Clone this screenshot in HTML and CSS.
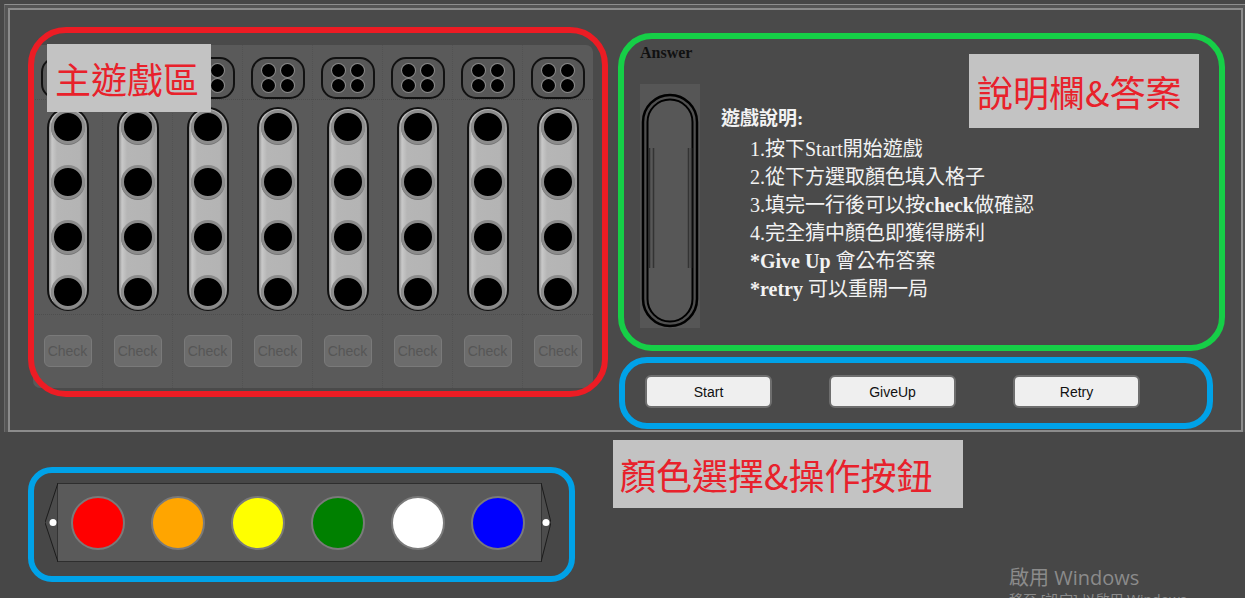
FILE: index.html
```html
<!DOCTYPE html>
<html lang="zh-Hant">
<head>
<meta charset="utf-8">
<title>Mastermind</title>
<link rel="stylesheet" href="styles.css">
</head>
<body>
<div class="screen">
  <div class="frame">
    <div class="panel">
      <div class="board">
        <div class="col"><div class="hint-cell"><div class="hint"><i></i><i></i><i></i><i></i></div></div><div class="tube-cell"><div class="tube"><b class="peg"></b><b class="peg"></b><b class="peg"></b><b class="peg"></b></div></div><div class="check-cell"><div class="check">Check</div></div></div>
        <div class="col"><div class="hint-cell"><div class="hint"><i></i><i></i><i></i><i></i></div></div><div class="tube-cell"><div class="tube"><b class="peg"></b><b class="peg"></b><b class="peg"></b><b class="peg"></b></div></div><div class="check-cell"><div class="check">Check</div></div></div>
        <div class="col"><div class="hint-cell"><div class="hint"><i></i><i></i><i></i><i></i></div></div><div class="tube-cell"><div class="tube"><b class="peg"></b><b class="peg"></b><b class="peg"></b><b class="peg"></b></div></div><div class="check-cell"><div class="check">Check</div></div></div>
        <div class="col"><div class="hint-cell"><div class="hint"><i></i><i></i><i></i><i></i></div></div><div class="tube-cell"><div class="tube"><b class="peg"></b><b class="peg"></b><b class="peg"></b><b class="peg"></b></div></div><div class="check-cell"><div class="check">Check</div></div></div>
        <div class="col"><div class="hint-cell"><div class="hint"><i></i><i></i><i></i><i></i></div></div><div class="tube-cell"><div class="tube"><b class="peg"></b><b class="peg"></b><b class="peg"></b><b class="peg"></b></div></div><div class="check-cell"><div class="check">Check</div></div></div>
        <div class="col"><div class="hint-cell"><div class="hint"><i></i><i></i><i></i><i></i></div></div><div class="tube-cell"><div class="tube"><b class="peg"></b><b class="peg"></b><b class="peg"></b><b class="peg"></b></div></div><div class="check-cell"><div class="check">Check</div></div></div>
        <div class="col"><div class="hint-cell"><div class="hint"><i></i><i></i><i></i><i></i></div></div><div class="tube-cell"><div class="tube"><b class="peg"></b><b class="peg"></b><b class="peg"></b><b class="peg"></b></div></div><div class="check-cell"><div class="check">Check</div></div></div>
        <div class="col last"><div class="hint-cell"><div class="hint"><i></i><i></i><i></i><i></i></div></div><div class="tube-cell"><div class="tube"><b class="peg"></b><b class="peg"></b><b class="peg"></b><b class="peg"></b></div></div><div class="check-cell"><div class="check">Check</div></div></div>
      </div>
      <div class="side">
        <div class="info">
          <div class="answer-col">
            <div class="answer-label">Answer</div>
            <div class="capsule-bg">
              <svg width="60" height="244" viewBox="0 0 60 244">
                <rect x="3" y="11" width="54" height="231" rx="27" fill="#505050" stroke="#000" stroke-width="2.5"/>
                <rect x="7.5" y="15.5" width="45" height="222" rx="22.5" fill="#575757" stroke="#000" stroke-width="2"/>
                <line x1="9.5" y1="64" x2="9.5" y2="184" stroke="#2e2e2e" stroke-width="1.5"/>
                <line x1="13.5" y1="64" x2="13.5" y2="184" stroke="#333" stroke-width="1.5"/>
                <line x1="48.5" y1="64" x2="48.5" y2="184" stroke="#333" stroke-width="1.5"/>
                <line x1="51.5" y1="64" x2="51.5" y2="184" stroke="#2e2e2e" stroke-width="1.5"/>
              </svg>
            </div>
          </div>
          <div class="instructions">
            <div class="instr-title">遊戲說明:</div>
            <div class="instr-list">
              <div>1.按下Start開始遊戲</div>
              <div>2.從下方選取顏色填入格子</div>
              <div>3.填完一行後可以按<strong>check</strong>做確認</div>
              <div>4.完全猜中顏色即獲得勝利</div>
              <div><strong>*Give Up</strong> 會公布答案</div>
              <div><strong>*retry</strong> 可以重開一局</div>
            </div>
          </div>
        </div>
        <div class="controls">
          <div class="btn">Start</div>
          <div class="btn">GiveUp</div>
          <div class="btn">Retry</div>
        </div>
      </div>
    </div>
  </div>

  <div class="bottom">
    <div class="palette">
      <svg class="cap" width="13" height="79" viewBox="0 0 13 79">
        <polygon points="13,0 0,39.5 13,79" fill="#4c4c4c" stroke="#1c1c1c" stroke-width="1"/>
        <circle cx="8" cy="39.5" r="3.5" fill="#fff"/>
      </svg>
      <div class="strip">
        <span class="swatch red"></span>
        <span class="swatch orange"></span>
        <span class="swatch yellow"></span>
        <span class="swatch green"></span>
        <span class="swatch white"></span>
        <span class="swatch blue"></span>
      </div>
      <svg class="cap" width="10" height="79" viewBox="0 0 10 79">
        <polygon points="0,0 10,39.5 0,79" fill="#4c4c4c" stroke="#1c1c1c" stroke-width="1"/>
        <circle cx="5" cy="39.5" r="3.5" fill="#fff"/>
      </svg>
    </div>
  </div>

  <div class="anno anno-red"></div>
  <div class="anno anno-green"></div>
  <div class="anno anno-blue1"></div>
  <div class="anno anno-blue2"></div>

  <div class="tag tag1">主遊戲區</div>
  <div class="tag tag2">說明欄&amp;答案</div>
  <div class="tag tag3">顏色選擇&amp;操作按鈕</div>

  <div class="wm">
    <div class="wm1">啟用 Windows</div>
    <div class="wm2">移至 [設定] 以啟用 Windows。</div>
  </div>
</div>
</body>
</html>
```

FILE: styles.css
```css
* { box-sizing: border-box; }

body {
  margin: 0;
  background: #474747;
}

.screen {
  position: relative;
  width: 1245px;
  height: 598px;
  overflow: hidden;
  background: #474747;
  font-family: "Liberation Sans", Arial, sans-serif;
}

.frame {
  margin: 4px 0 0 4px;
  width: 1241px;
  border-top: 1px solid #8e8e8e;
  border-left: 1px solid #6a6a6a;
  background: #555;
  padding: 3px 0 0 3px;
}

.panel {
  width: 1235px;
  height: 424px;
  border: 2px solid #8c8c8c;
  background: #4a4a4a;
  display: flex;
  padding: 35px 0 0 23px;
}

/* ---------- board ---------- */
.board {
  flex: none;
  width: 560px;
  height: 343px;
  background: #5a5a5a;
  border-radius: 7px;
  display: grid;
  grid-template-columns: repeat(8, 70px);
}

.col {
  display: flex;
  flex-direction: column;
  align-items: center;
  border-right: 1px dotted #525252;
}
.col.last { border-right: none; }

.hint-cell {
  width: 100%;
  height: 55px;
  padding-top: 12px;
  display: flex;
  justify-content: center;
  border-bottom: 1px dotted #4e4e4e;
}

.hint {
  width: 54px;
  height: 42px;
  border: 2px solid #111;
  border-radius: 15px;
  background: #585858;
  display: grid;
  grid-template-columns: 13px 13px;
  grid-template-rows: 13px 13px;
  column-gap: 6px;
  row-gap: 2px;
  place-content: center;
}
.hint i {
  border-radius: 50%;
  background: #000;
  box-shadow: 0 0 0 1px #8a8a8a;
}

.tube-cell {
  width: 100%;
  height: 215px;
  padding-top: 7px;
  display: flex;
  justify-content: center;
  border-bottom: 1px dotted #4e4e4e;
}

.tube {
  width: 42px;
  height: 204px;
  border: 2px solid #111;
  border-radius: 21px;
  background: linear-gradient(90deg, #8e8e8e 0, #c9c9c9 3px, #b6b6b6 8px, #b4b4b4 80%, #9a9a9a 100%);
  display: flex;
  flex-direction: column;
  align-items: center;
  padding-top: 1px;
  gap: 21px;
}

.peg {
  flex: none;
  width: 34px;
  height: 34px;
  border-radius: 50%;
  background: #000;
  border: 3px solid #8c8c8c;
  box-shadow: 0 1px 0 #777;
}

.check-cell {
  height: 69px;
  padding-top: 20px;
  display: flex;
  justify-content: center;
}

.check {
  width: 48px;
  height: 32px;
  background: #6c6c6c;
  border: 1px solid #7a7a7a;
  border-radius: 6px;
  color: #565656;
  font: 14px "Liberation Sans", Arial, sans-serif;
  display: flex;
  align-items: center;
  justify-content: center;
}

/* ---------- side ---------- */
.side {
  flex: 1;
  margin-left: 47px;
  display: flex;
  flex-direction: column;
}

.info {
  height: 330px;
  display: flex;
}

.answer-col { width: 60px; }

.answer-label {
  font: bold 16px/16px "Liberation Serif", serif;
  color: #111;
}

.capsule-bg {
  margin-top: 23px;
  width: 60px;
  height: 244px;
  background: #565656;
}
.capsule-bg svg { display: block; }

.instructions {
  margin-left: 21px;
  margin-top: 60px;
  color: #f2f2f2;
  font: 20px/28px "Liberation Serif", "Noto Sans CJK TC", serif;
}
.instr-title {
  font-weight: bold;
  font-size: 19px;
}
.instr-list {
  margin-top: 2px;
  padding-left: 29px;
}
.instr-list strong { font-weight: bold; }

.controls {
  display: flex;
  gap: 57px;
  padding-left: 5px;
}

.btn {
  width: 127px;
  height: 33px;
  background: #efefef;
  border: 2px solid #6e6e6e;
  border-radius: 6px;
  color: #111;
  font: 14px "Liberation Sans", Arial, sans-serif;
  display: flex;
  align-items: center;
  justify-content: center;
}

/* ---------- bottom palette ---------- */
.bottom {
  padding: 51px 0 0 45px;
}

.palette {
  display: flex;
  height: 79px;
}
.cap { display: block; flex: none; }

.strip {
  width: 483px;
  height: 79px;
  background: #5a5a5a;
  border-top: 1px solid #2e2e2e;
  border-bottom: 1px solid #2e2e2e;
  display: flex;
  align-items: center;
  gap: 26px;
  padding-left: 13px;
}

.swatch {
  flex: none;
  width: 54px;
  height: 54px;
  border-radius: 50%;
  border: 2px solid #7a7a7a;
}
.swatch.red { background: #ff0000; }
.swatch.orange { background: #ffa500; }
.swatch.yellow { background: #ffff00; }
.swatch.green { background: #008000; }
.swatch.white { background: #ffffff; }
.swatch.blue { background: #0000ff; }

/* ---------- annotations ---------- */
.anno {
  position: absolute;
  pointer-events: none;
}
.anno-red {
  left: 28px; top: 27px; width: 580px; height: 370px;
  border: 6px solid #ed1c24;
  border-radius: 38px;
}
.anno-green {
  left: 618px; top: 33px; width: 607px; height: 318px;
  border: 6px solid #16cf47;
  border-radius: 34px;
}
.anno-blue1 {
  left: 619px; top: 357px; width: 594px; height: 72px;
  border: 6px solid #00a2e8;
  border-radius: 28px;
}
.anno-blue2 {
  left: 28px; top: 467px; width: 547px; height: 115px;
  border: 6px solid #00a2e8;
  border-radius: 24px;
}

.tag {
  position: absolute;
  background: #c3c3c3;
  color: #e8212b;
  font: 36px/1 "Noto Sans CJK TC", sans-serif;
  display: flex;
  align-items: center;
  padding-left: 8px;
  white-space: nowrap;
}
.tag1 { left: 47px; top: 44px; width: 164px; height: 68px; }
.tag2 { left: 969px; top: 54px; width: 230px; height: 74px; }
.tag3 { left: 613px; top: 440px; width: 350px; height: 68px; padding-left: 7px; }

.wm {
  position: absolute;
  left: 1009px;
  top: 565px;
  color: #8b8b8b;
  font-family: "Open Sans", "Noto Sans CJK TC", sans-serif;
  white-space: nowrap;
}
.wm1 { font-size: 20px; line-height: 26px; }
.wm2 { font-size: 14px; line-height: 18px; }
```
